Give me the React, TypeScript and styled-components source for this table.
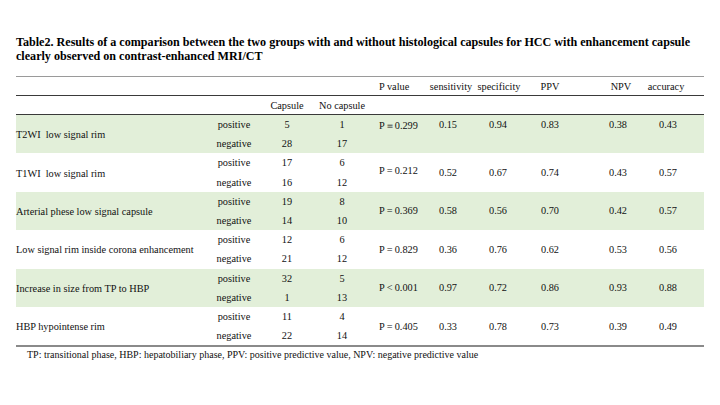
import React from "react";
import styled, { createGlobalStyle } from "styled-components";

const Global = createGlobalStyle`
  html, body { margin: 0; padding: 0; background: #ffffff; }
  body { font-family: "Liberation Serif", "Times New Roman", serif; color: #111; }
`;

const COLS = "194px 48px 58px 52px 60px 46px 50px 74px 44px 50px 12px";

const Page = styled.div`
  width: 720px;
  height: 405px;
  box-sizing: border-box;
  padding: 35px 16px 0 16px;
  display: flex;
  flex-direction: column;
`;

const Title = styled.h1`
  margin: 0;
  width: 690px;
  font-size: 12.1px;
  line-height: 14px;
  font-weight: bold;
  color: #000;
`;

const Table = styled.div`
  margin-top: 13px;
  width: 688px;
  display: flex;
  flex-direction: column;
  border-top: 1px solid #9a9a9a;
  border-bottom: 2px solid #8a8a8a;
  font-size: 10.3px;
`;

const HeadRow = styled.div`
  display: grid;
  grid-template-columns: ${COLS};
  height: 18px;
  align-items: center;
  border-bottom: 1px solid #3a3a3a;
`;

const SubHeadRow = styled(HeadRow)``;

const Block = styled.div<{ $shade: boolean }>`
  display: grid;
  grid-template-columns: ${COLS};
  grid-template-rows: 19.2px 19.2px;
  align-items: center;
  background: ${(p) => (p.$shade ? "#e2efd9" : "transparent")};
`;

const Label = styled.div`
  grid-column: 1;
  grid-row: 1 / 3;
  align-self: center;
  white-space: nowrap;
  padding-top: 1px;
`;

const Cell = styled.div<{ $col: number; $row?: number; $padR?: number; $padL?: number; $left?: boolean }>`
  grid-column: ${(p) => p.$col};
  ${(p) => (p.$row ? `grid-row: ${p.$row};` : "")}
  text-align: ${(p) => (p.$left ? "left" : "center")};
  padding-right: ${(p) => p.$padR ?? 0}px;
  padding-left: ${(p) => p.$padL ?? 0}px;
  white-space: nowrap;
`;

const Stat = styled.div<{ $col: number; $padR?: number; $padL?: number; $left?: boolean; $top?: boolean; $raise?: number }>`
  grid-column: ${(p) => p.$col};
  grid-row: 1 / 3;
  align-self: ${(p) => (p.$top ? "start" : "center")};
  ${(p) => (p.$top ? "padding-top: 4px;" : "")}
  text-align: ${(p) => (p.$left ? "left" : "center")};
  padding-right: ${(p) => p.$padR ?? 0}px;
  padding-left: ${(p) => p.$padL ?? 0}px;
  margin-top: ${(p) => -(p.$raise ?? 0) * 2}px;
  white-space: nowrap;
`;

const Note = styled.p`
  margin: 2px 0 0 11px;
  font-size: 10px;
  line-height: 12px;
`;

type Row = {
  label: string;
  pos: [string, string];
  neg: [string, string];
  p: string;
  stats: string[];
  top?: boolean;
  raise?: number;
};

const rows: Row[] = [
  { label: "T2WI\u00a0 low signal rim", pos: ["5", "1"], neg: ["28", "17"], p: "P\uff1d0.299", stats: ["0.15", "0.94", "0.83", "0.38", "0.43"], top: true },
  { label: "T1WI\u00a0 low signal rim", pos: ["17", "6"], neg: ["16", "12"], p: "P\u2009=\u20090.212", stats: ["0.52", "0.67", "0.74", "0.43", "0.57"], raise: 2 },
  { label: "Arterial phese low signal capsule", pos: ["19", "8"], neg: ["14", "10"], p: "P\u2009=\u20090.369", stats: ["0.58", "0.56", "0.70", "0.42", "0.57"] },
  { label: "Low signal rim inside corona enhancement", pos: ["12", "6"], neg: ["21", "12"], p: "P\u2009=\u20090.829", stats: ["0.36", "0.76", "0.62", "0.53", "0.56"] },
  { label: "Increase in size from TP to HBP", pos: ["32", "5"], neg: ["1", "13"], p: "P\u2009<\u20090.001", stats: ["0.97", "0.72", "0.86", "0.93", "0.88"] },
  { label: "HBP hypointense rim", pos: ["11", "4"], neg: ["22", "14"], p: "P\u2009=\u20090.405", stats: ["0.33", "0.78", "0.73", "0.39", "0.49"] },
];

const statCols = [
  { col: 6, padR: 6 },
  { col: 7, padR: 2 },
  { col: 8, padR: 22 },
  { col: 9, padR: 4 },
  { col: 10, padL: 2 },
];

const headers = [
  { text: "sensitivity", col: 6 },
  { text: "specificity", col: 7 },
  { text: "PPV", col: 8, padR: 22 },
  { text: "NPV", col: 9, padL: 2 },
  { text: "accuracy", col: 10, padR: 2 },
];

export default function App() {
  return (
    <>
      <Global />
      <Page>
        <Title>
          Table2. Results of a comparison between the two groups with and without histological capsules for HCC with enhancement capsule
          clearly observed on contrast-enhanced MRI/CT
        </Title>
        <Table>
          <HeadRow>
            <Cell $col={5} $left $padL={11}>P value</Cell>
            {headers.map((h) => (
              <Cell key={h.text} $col={h.col} $padR={h.padR} $padL={h.padL}>{h.text}</Cell>
            ))}
          </HeadRow>
          <SubHeadRow>
            <Cell $col={3}>Capsule</Cell>
            <Cell $col={4}>No capsule</Cell>
          </SubHeadRow>
          {rows.map((r, i) => (
            <Block key={r.label} $shade={i % 2 === 0}>
              <Label>{r.label}</Label>
              <Cell $col={2} $row={1}>positive</Cell>
              <Cell $col={3} $row={1}>{r.pos[0]}</Cell>
              <Cell $col={4} $row={1}>{r.pos[1]}</Cell>
              <Cell $col={2} $row={2}>negative</Cell>
              <Cell $col={3} $row={2}>{r.neg[0]}</Cell>
              <Cell $col={4} $row={2}>{r.neg[1]}</Cell>
              <Stat $col={5} $left $padL={11} $top={r.top} $raise={r.raise}>{r.p}</Stat>
              {r.stats.map((s, k) => (
                <Stat key={k} $col={statCols[k].col} $padR={statCols[k].padR} $padL={statCols[k].padL} $top={r.top}>
                  {s}
                </Stat>
              ))}
            </Block>
          ))}
        </Table>
        <Note>TP: transitional phase, HBP: hepatobiliary phase, PPV: positive predictive value, NPV: negative predictive value</Note>
      </Page>
    </>
  );
}
